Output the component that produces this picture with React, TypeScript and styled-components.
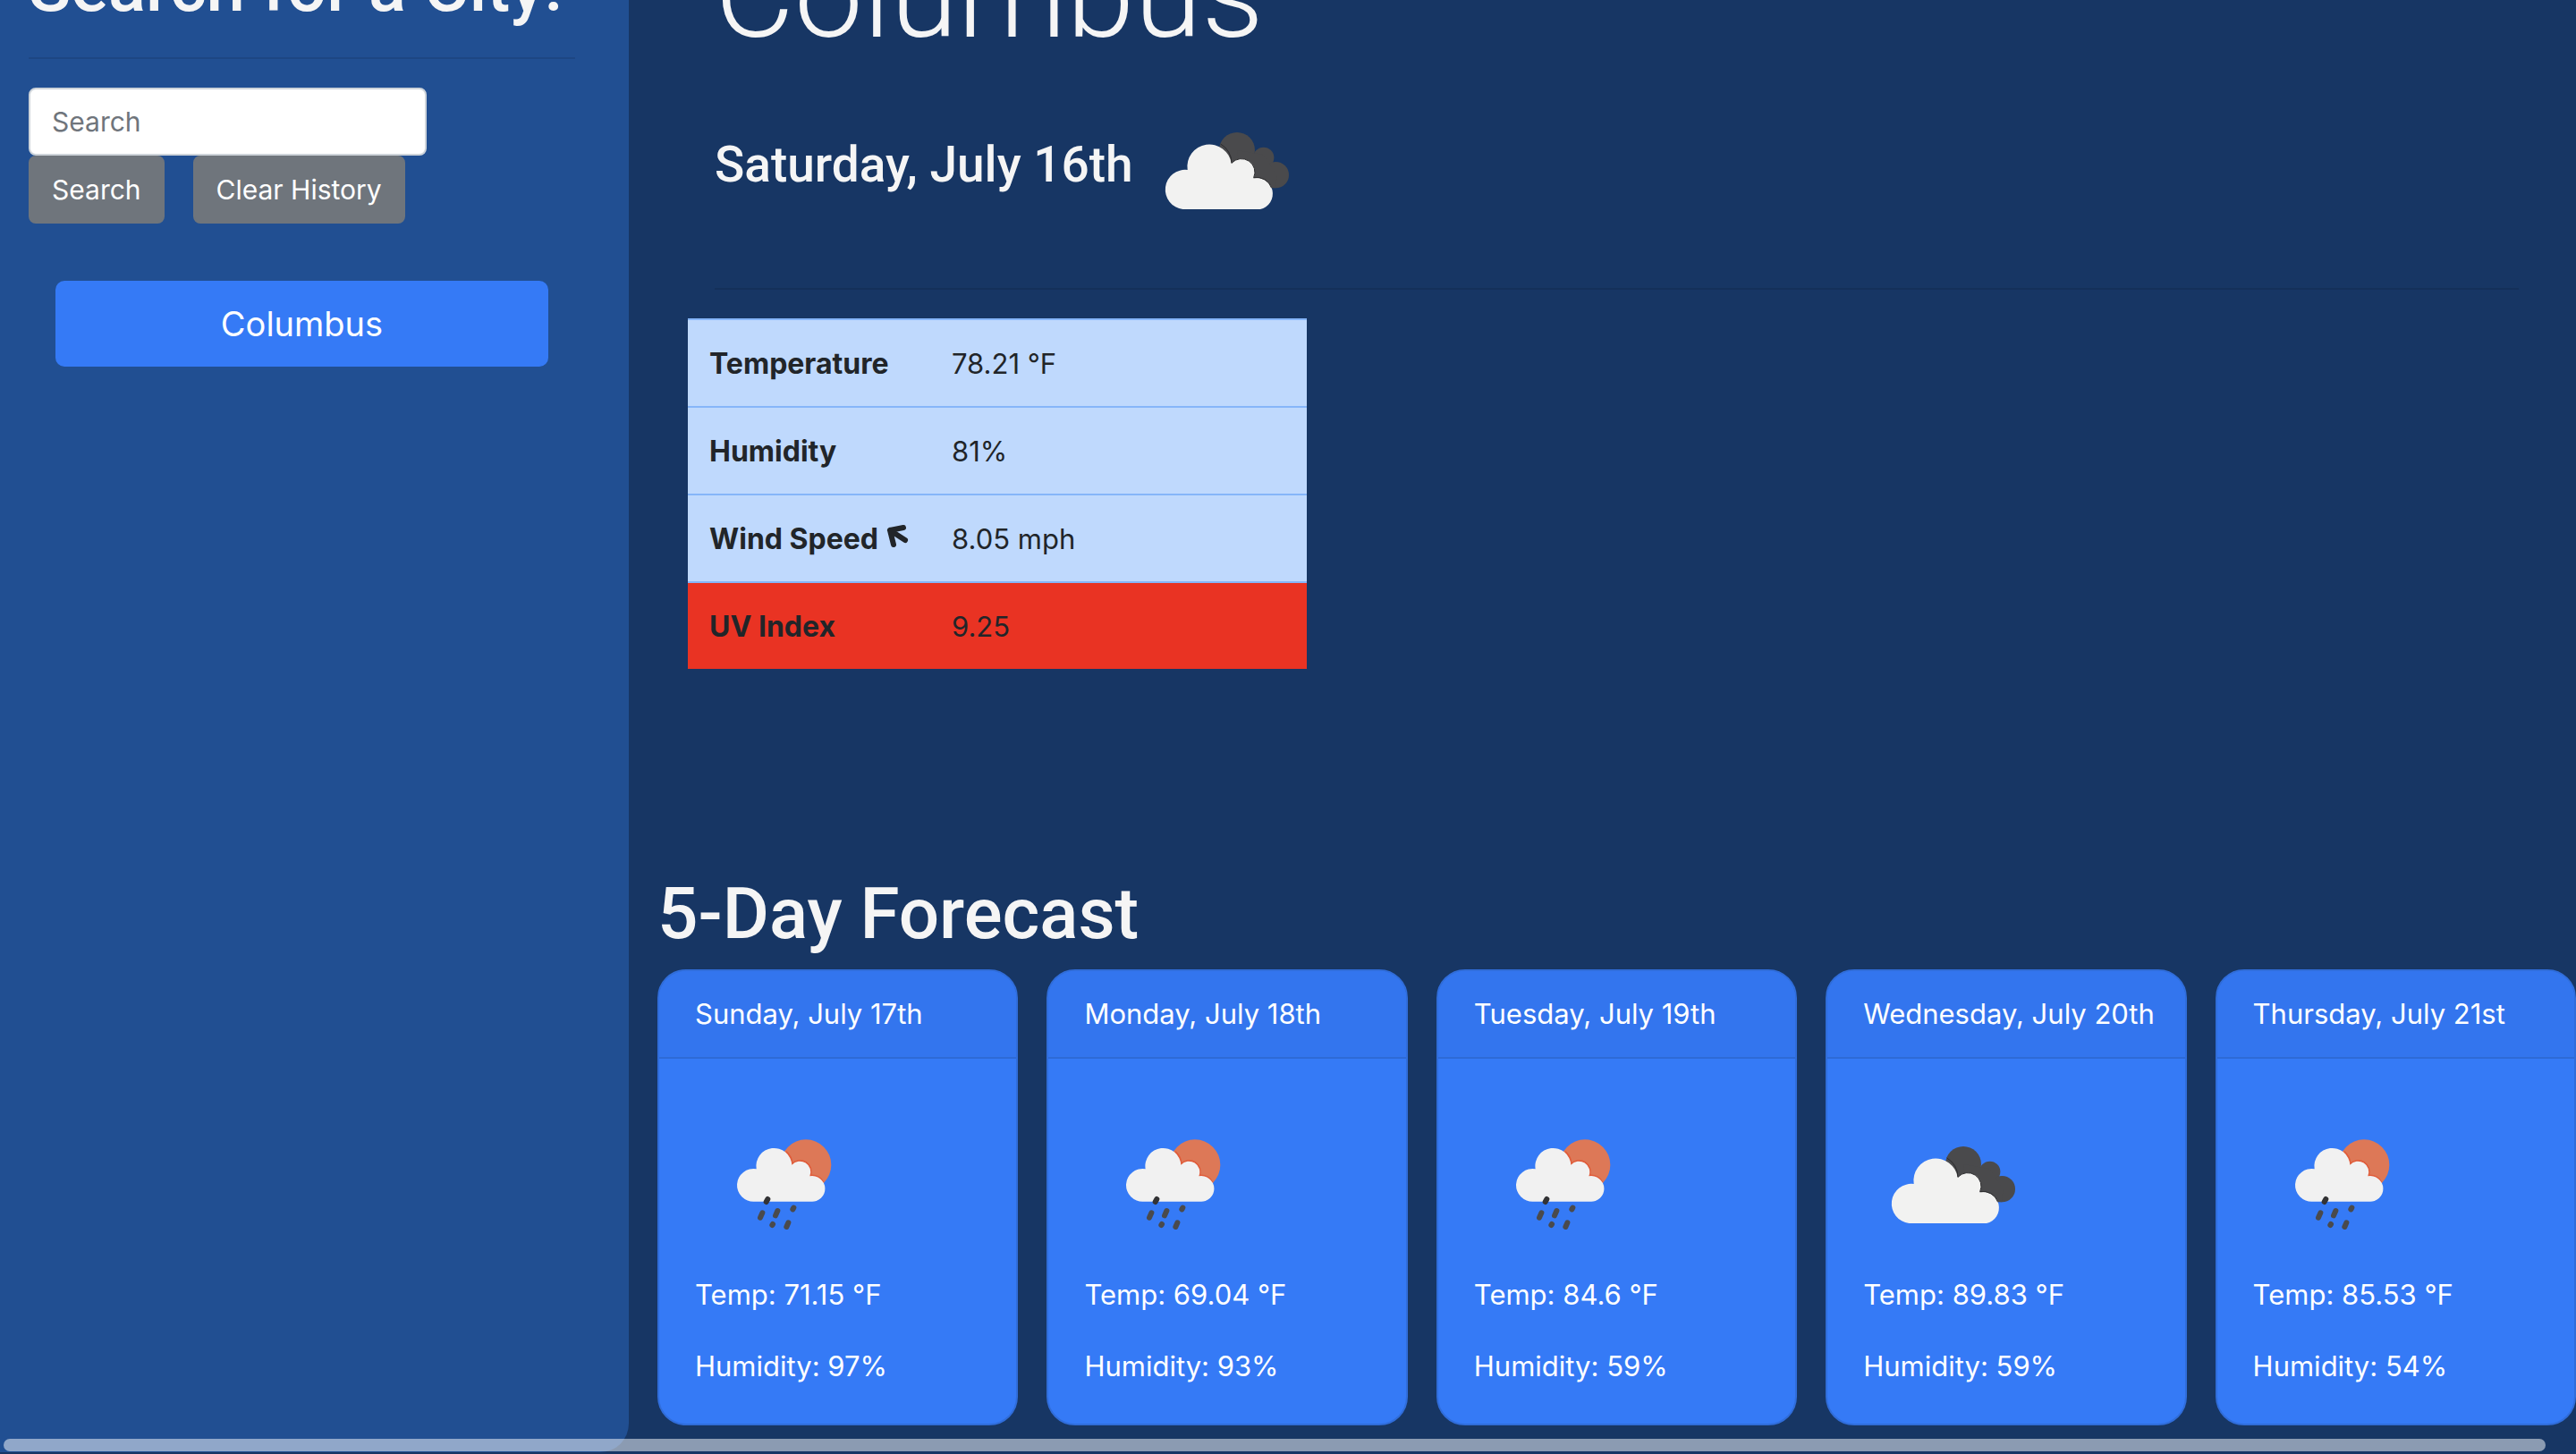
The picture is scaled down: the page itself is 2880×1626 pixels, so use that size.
import React from 'react';
import styled, { createGlobalStyle } from 'styled-components';

const GlobalStyle = createGlobalStyle`
  *, *::before, *::after { box-sizing: border-box; }
  html, body { margin: 0; background: #173664; overflow: hidden; }
  body {
    font-family: Inter, Roboto, "Liberation Sans", sans-serif;
    font-size: 31px;
    line-height: 48px;
    color: #212529;
  }
  h1, h2, h3, p { margin: 0; }
  h1, h2, h3 { font-family: Roboto, Inter, "Liberation Sans", sans-serif; }
  button, input { font: inherit; }
`;

const Viewport = styled.div`
  position: relative;
  height: 100vh;
  overflow: hidden;
  display: flex;
  flex-direction: column;
  justify-content: flex-end;
`;

const Page = styled.div`
  display: flex;
  flex: none;
`;

const Sidebar = styled.aside`
  flex: none;
  width: 703px;
  padding: 16px 60px 0 32px;
  margin-bottom: 2px;
  background: #214f92;
  border-radius: 0 0 32px 0;
  display: flex;
  flex-direction: column;
`;

const Heading = styled.h2<{ $size?: number }>`
  margin-bottom: -4px;
  font-size: ${p => p.$size ?? 80}px;
  line-height: 100px;
  font-weight: 500;
  color: #f5f5f5;
  white-space: nowrap;
`;

const Rule = styled.hr`
  width: 100%;
  height: 2px;
  margin: 32px 0;
  border: 0;
  background: rgba(0, 0, 0, 0.1);
`;

const SearchForm = styled.form`
  display: flex;
  flex-wrap: wrap;
  column-gap: 32px;
  font-size: 30px;
`;

const SearchInput = styled.input`
  width: 445px;
  height: 76px;
  padding: 12px 24px;
  border: 2px solid #ced4da;
  border-radius: 8px;
  background: #fff;
  color: #495057;
  &::placeholder { color: #6f757c; opacity: 1; }
`;

const GreyButton = styled.button`
  height: 76px;
  padding: 12px 24px;
  border: 2px solid #6f757c;
  border-radius: 8px;
  background: #6f757c;
  color: #fff;
`;

const History = styled.div`
  display: flex;
  flex-direction: column;
  padding: 64px 30px 0;
`;

const CityButton = styled.button`
  height: 96px;
  border: 0;
  border-radius: 10px;
  background: #357af6;
  color: #fff;
  font-size: 38px;
  line-height: 60px;
`;

const Main = styled.main`
  flex: 1;
  min-width: 0;
  padding: 0 0 32px 32px;
`;

const Current = styled.section`
  padding: 0 64px 224px;
`;

const CityName = styled.h1`
  margin-bottom: 22px;
  font-size: 137px;
  line-height: 148px;
  font-weight: 300;
  color: #f5f5f5;
`;

const Today = styled.div`
  display: flex;
  align-items: flex-start;
`;

const TodayDate = styled.h3`
  padding-top: 60px;
  margin-right: 4px;
  font-size: 55px;
  line-height: 68px;
  font-weight: 500;
  color: #f5f5f5;
  white-space: nowrap;
`;

const Readings = styled.table`
  width: 692px;
  margin-left: -30px;
  border-collapse: separate;
  border-spacing: 0;
  table-layout: fixed;
`;

const Reading = styled.tr<{ $alert?: boolean }>`
  background: ${p => (p.$alert ? '#e93323' : '#bfd9fd')};
  th, td {
    padding: 25px 24px 23px;
    border-top: 2px solid #86b6f9;
    text-align: left;
    vertical-align: top;
    white-space: nowrap;
  }
  th { width: 271px; font-size: 32px; font-weight: 700; }
`;

const WindArrow = styled.svg`
  width: 28px;
  height: 28px;
  margin-left: 8px;
`;

const Forecast = styled.div`
  display: grid;
  grid-template-columns: repeat(5, minmax(0, 1fr));
  gap: 32px;
  padding-top: 16px;
`;

const Card = styled.article`
  border: 2px solid #306dda;
  border-radius: 32px;
  background: #357af6;
  color: #fff;
  overflow: hidden;
  white-space: nowrap;
`;

const CardHeader = styled.header`
  padding: 24px 40px;
  background: #3375ee;
  border-bottom: 2px solid #2e6ad6;
`;

const CardBody = styled.div`
  padding: 40px;
  display: flex;
  flex-direction: column;
  p + p { margin-top: 32px; }
`;

const Picture = styled.svg`
  display: block;
  flex: none;
  width: 200px;
  height: 200px;
`;

const ScrollThumb = styled.div`
  position: absolute;
  left: 4px;
  right: 34px;
  bottom: 3px;
  height: 14px;
  border-radius: 7px;
  background: rgba(255, 255, 255, 0.5);
`;

function CloudsIcon() {
  return (
    <Picture viewBox="-29 -120 600 600" role="img" aria-label="Broken clouds">
      <g fill="#4a4a4c">
        <circle cx="307" cy="114" r="60" />
        <circle cx="396" cy="139" r="35" />
        <circle cx="437" cy="197" r="44" />
        <path d="M307 114 396 130 440 197 437 241H330Z" />
      </g>
      <path
        d="M125 312A66 66 0 1 1 141 180A74 74 0 1 1 288 158A45 45 0 0 1 362 208A53 53 0 0 1 385 312Z"
        fill="#f2f2f1"
      />
      <path
        d="M252 93A74 74 0 0 1 289 157A45 45 0 0 1 363 206A53 53 0 0 1 423 241"
        fill="none"
        stroke="#2c2c2e"
        strokeWidth="3"
      />
    </Picture>
  );
}

function RainIcon() {
  return (
    <Picture viewBox="-9 -50 600 600" role="img" aria-label="Rain">
      <circle cx="363" cy="186" r="85" fill="#dd7857" />
      <path
        d="M296 141A60 60 0 0 1 317 184A36 36 0 0 1 377 222A43 43 0 0 1 422 246"
        fill="none"
        stroke="#e05c3a"
        strokeWidth="6"
      />
      <path
        d="M190 309A55 55 0 1 1 197 200A60 60 0 1 1 316 186A36 36 0 0 1 376 224A43 43 0 1 1 380 309Z"
        fill="#f1f1f1"
      />
      <g stroke="#4a4a4c" strokeWidth="18" strokeLinecap="round">
        <path d="M235 301 230 310" stroke="#333335" />
        <path d="M217 347 210 363" />
        <path d="M268 340 261 356" />
        <path d="M322 330 319 335" />
        <path d="M252 385 250 388" />
        <path d="M304 380 298 394" />
      </g>
    </Picture>
  );
}

const days = [
  { date: 'Sunday, July 17th', rain: true, temp: '71.15', humidity: 97 },
  { date: 'Monday, July 18th', rain: true, temp: '69.04', humidity: 93 },
  { date: 'Tuesday, July 19th', rain: true, temp: '84.6', humidity: 59 },
  { date: 'Wednesday, July 20th', rain: false, temp: '89.83', humidity: 59 },
  { date: 'Thursday, July 21st', rain: true, temp: '85.53', humidity: 54 },
];

export default function App() {
  return (
    <>
      <GlobalStyle />
      <Viewport>
        <Page>
          <Sidebar>
            <Heading $size={78}>Search for a City:</Heading>
            <Rule />
            <SearchForm onSubmit={e => e.preventDefault()}>
              <SearchInput type="search" placeholder="Search" aria-label="Search" />
              <GreyButton type="submit">Search</GreyButton>
              <GreyButton type="button">Clear History</GreyButton>
            </SearchForm>
            <History>
              <CityButton type="button">Columbus</CityButton>
            </History>
          </Sidebar>
          <Main>
            <Current>
              <CityName>Columbus</CityName>
              <Today>
                <TodayDate>Saturday, July 16th</TodayDate>
                <CloudsIcon />
              </Today>
              <Rule />
              <Readings>
                <tbody>
                  <Reading>
                    <th scope="row">Temperature</th>
                    <td>78.21 °F</td>
                  </Reading>
                  <Reading>
                    <th scope="row">Humidity</th>
                    <td>81%</td>
                  </Reading>
                  <Reading>
                    <th scope="row">
                      Wind Speed
                      <WindArrow viewBox="0 0 28 28" aria-hidden="true">
                        <path
                          d="M20 4 5 7 9 23M5 7 22 18"
                          fill="none"
                          stroke="currentColor"
                          strokeWidth="6"
                          strokeLinecap="round"
                          strokeLinejoin="round"
                        />
                      </WindArrow>
                    </th>
                    <td>8.05 mph</td>
                  </Reading>
                  <Reading $alert>
                    <th scope="row">UV Index</th>
                    <td>9.25</td>
                  </Reading>
                </tbody>
              </Readings>
            </Current>
            <Heading>5-Day Forecast</Heading>
            <Forecast>
              {days.map(day => (
                <Card key={day.date}>
                  <CardHeader>{day.date}</CardHeader>
                  <CardBody>
                    {day.rain ? <RainIcon /> : <CloudsIcon />}
                    <p>Temp: {day.temp} °F</p>
                    <p>Humidity: {day.humidity}%</p>
                  </CardBody>
                </Card>
              ))}
            </Forecast>
          </Main>
        </Page>
        <ScrollThumb />
      </Viewport>
    </>
  );
}
